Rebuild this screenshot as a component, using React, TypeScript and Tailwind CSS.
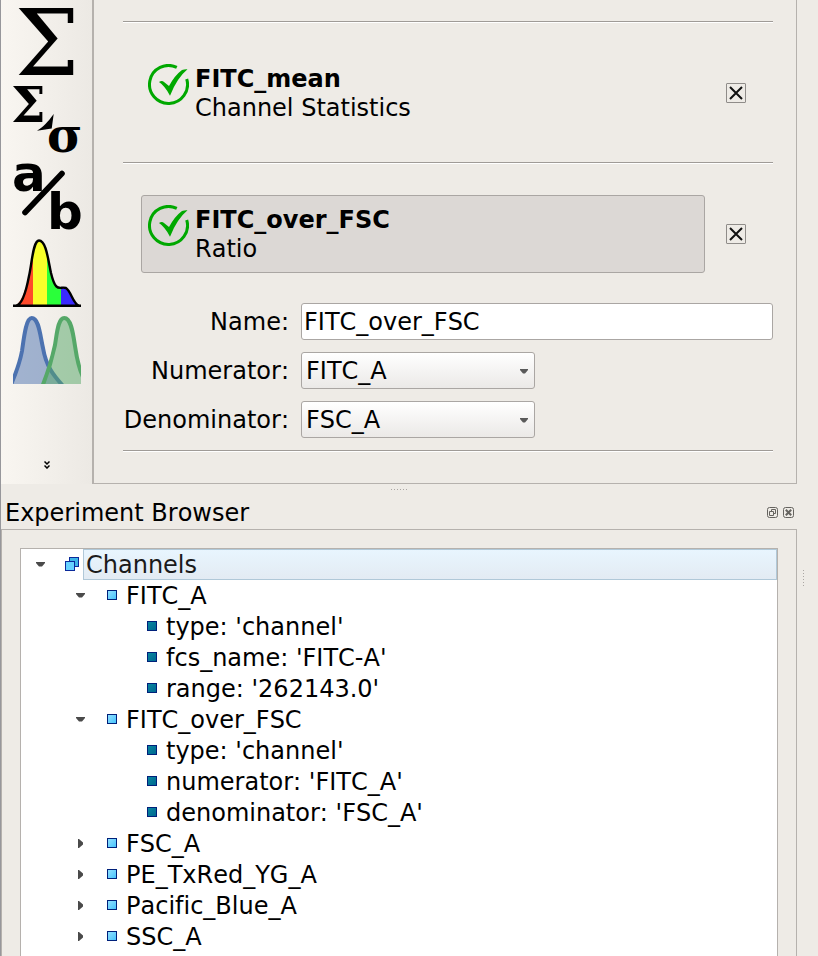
import { useState, type ReactNode } from 'react';

const tools: { label: string; art: ReactNode }[] = [
  {
    label: 'Channel statistics',
    art: (
      <text x="2" y="67" fontSize="91" className="font-['DejaVu_Serif',serif]">
        Σ
      </text>
    ),
  },
  {
    label: 'Transformed statistics',
    art: (
      <>
        <g fontWeight="bold" className="font-['DejaVu_Serif',serif]">
          <text x="-2" y="37" fontSize="49">
            Σ
          </text>
          <text x="34" y="67" fontSize="48">
            σ
          </text>
        </g>
        <path d="M24 45.7C30 42 35 37 40.7 29L38.7 43.5Z" />
      </>
    ),
  },
  {
    label: 'Ratio',
    art: (
      <>
        <g fontSize="50" fontWeight="bold" className="font-['DejaVu_Sans',sans-serif]">
          <text x="-1" y="29">
            a
          </text>
          <text x="34" y="67">
            b
          </text>
        </g>
        <path d="M12 50.5L49 11.5" stroke="black" strokeWidth="5.6" strokeLinecap="round" />
      </>
    ),
  },
  {
    label: 'Bleedthrough',
    art: (
      <>
        <clipPath id="spectrum">
          <path d="M1 67C7 66 12 53 16 37C19 24 20 1 26 1C33 1 35 20 38 34C43 55 47 47 53 49C58 52 60 66 67 67Z" />
        </clipPath>
        <g clipPath="url(#spectrum)">
          <rect width="20" height="68" fill="#ff4a2a" />
          <rect x="20" width="14" height="68" fill="#f8ff2a" />
          <rect x="34" width="14" height="68" fill="#2aff3a" />
          <rect x="48" width="20" height="68" fill="#3a2aff" />
        </g>
        <path
          d="M0 66.7H3C9 66 13 53 16 37C19 24 20 1.5 26 1.5C33 1.5 35 20 38 34C43 55 47 47 53 49C58 52 60 65 66 66.7H68M0 66.7H68"
          fill="none"
          stroke="black"
          strokeWidth="2.4"
        />
      </>
    ),
  },
  {
    label: 'Gaussian mixture',
    art: (
      <>
        <clipPath id="mixture">
          <rect width="68" height="68" />
        </clipPath>
        <g strokeWidth="4" clipPath="url(#mixture)">
          <path
            d="M-3 71C4 55 7 46 9 35C11 21 13 2 18.7 2C26 2 27 19 30 32C33 50 40 59 51 71"
            fill="#4c72b080"
            stroke="#4c72b0"
          />
          <path
            d="M29 71C36 54 39 43 42 29C44 17 45 2 51.3 2C58 2 60 17 62 30C64 44 66 54 71 63V71"
            fill="#55a86880"
            stroke="#55a868"
          />
        </g>
      </>
    ),
  },
];

function Rule() {
  return <hr className="h-[2px] border-t border-b border-t-[#9f9b97] border-b-white" />;
}

function Operation({ name, kind, selected }: { name: string; kind: string; selected?: boolean }) {
  return (
    <div className="flex items-center gap-[21px] pr-[27px] pl-[18px]">
      <button
        className={`flex h-[78px] flex-1 items-start gap-[6px] rounded-[3px] border px-[6px] pt-[9px] text-left leading-[29px] ${
          selected ? 'border-[#aaa6a3] bg-[#dcd8d5]' : 'border-transparent'
        }`}
      >
        <svg width="41" height="41" viewBox="0 0 41 41" fill="none" aria-hidden="true">
          <path d="M28.8 3.4A19 19 0 1 0 38.7 15" stroke="#00a800" strokeWidth="3" />
          <path d="M11 18Q14 16 16 18L21 22Q27 11 34 6Q37 5 39.5 5.3Q29 14 22 31.7Q17 22 11 18Z" fill="#00a800" />
        </svg>
        <span className="flex flex-col pt-px">
          <strong>{name}</strong>
          <span>{kind}</span>
        </span>
      </button>
      <button
        aria-label={`Remove ${name}`}
        className="flex size-5 items-center justify-center rounded-[1px] border border-[#8f8c89]"
      >
        <svg width="14" height="14" viewBox="0 0 14 14" aria-hidden="true">
          <path d="M1 1L13 13M13 1L1 13" stroke="#111" strokeWidth="2" />
        </svg>
      </button>
    </div>
  );
}

function Arrow({ open }: { open: boolean }) {
  return (
    <svg width="10" height="10" viewBox="0 0 10 10" fill="#4a4a4a" className="block" aria-hidden="true">
      <path d={open ? 'M1 3H10V4L7 7.5H4L1 4Z' : 'M3 1H4L8 4.5V6.5L4 10H3Z'} />
    </svg>
  );
}

function Picker({ id, options }: { id: string; options: string[] }) {
  return (
    <div className="relative w-[234px]">
      <select
        id={id}
        className="block h-[37px] w-full appearance-none rounded-[3px] border border-[#aaa6a3] bg-linear-to-b from-white to-[#ebe9e7] pt-[2px] pl-[4px] leading-[29px]"
      >
        {options.map((option) => (
          <option key={option}>{option}</option>
        ))}
      </select>
      <svg
        width="8"
        height="5"
        viewBox="0 0 8 5"
        fill="#5a5a5a"
        className="pointer-events-none absolute top-[17px] right-[7px]"
        aria-hidden="true"
      >
        <path d="M0 0H8V1L5 4.5H3L0 1Z" />
      </svg>
    </div>
  );
}

type TreeNode = { label: string; children?: TreeNode[]; collapsed?: boolean };

const channels: TreeNode = {
  label: 'Channels',
  children: [
    {
      label: 'FITC_A',
      children: [{ label: "type: 'channel'" }, { label: "fcs_name: 'FITC-A'" }, { label: "range: '262143.0'" }],
    },
    {
      label: 'FITC_over_FSC',
      children: [{ label: "type: 'channel'" }, { label: "numerator: 'FITC_A'" }, { label: "denominator: 'FSC_A'" }],
    },
    { label: 'FSC_A', children: [{ label: "type: 'channel'" }], collapsed: true },
    { label: 'PE_TxRed_YG_A', children: [{ label: "type: 'channel'" }], collapsed: true },
    { label: 'Pacific_Blue_A', children: [{ label: "type: 'channel'" }], collapsed: true },
    { label: 'SSC_A', children: [{ label: "type: 'channel'" }], collapsed: true },
  ],
};

function NodeIcon({ root, leaf }: { root: boolean; leaf: boolean }) {
  if (root) {
    return (
      <svg width="16" height="16" viewBox="0 0 16 16" stroke="#0a2a9a" aria-hidden="true">
        <rect x="5.5" y="1.5" width="9" height="9" fill="#3db4e6" />
        <rect x="1.5" y="5.5" width="9" height="9" fill="#66d2ff" />
      </svg>
    );
  }
  return (
    <span
      className={`mx-[3px] size-[10px] border border-[#00207a] bg-linear-to-br ${
        leaf ? 'from-[#0a86a0] to-[#006890]' : 'from-[#8fe0ff] to-[#44c4fc]'
      }`}
    />
  );
}

function Branch({ node, root = false }: { node: TreeNode; root?: boolean }) {
  const [open, setOpen] = useState(!node.collapsed);
  return (
    <li role="treeitem" aria-expanded={node.children ? open : undefined} aria-selected={root}>
      <div className="flex h-[31px] items-center pb-px">
        {node.children ? (
          <button
            aria-label={`Toggle ${node.label}`}
            className="mr-[19px] ml-[14px]"
            onClick={() => setOpen(!open)}
          >
            <Arrow open={open} />
          </button>
        ) : (
          <span className="w-[43px]" />
        )}
        <NodeIcon root={root} leaf={!node.children} />
        <span
          className={`ml-[3px] h-[31px] flex-1 self-start border pt-px pl-[2px] leading-[29px] ${
            root ? 'border-[#b0c8d8] bg-linear-to-b from-[#e8f5fe] to-[#e3ebf3] text-[#1a1a1a]' : 'border-transparent'
          }`}
        >
          {node.label}
        </span>
      </div>
      {node.children && open && (
        <ul role="group" className="pl-[40px]">
          {node.children.map((child) => (
            <Branch key={child.label} node={child} />
          ))}
        </ul>
      )}
    </li>
  );
}

export default function App() {
  return (
    <div className="flex h-screen overflow-hidden border-l border-[#97979b] bg-[#eeebe6] font-['DejaVu_Sans',sans-serif] text-[24px] text-black [font-kerning:none] [font-variant-ligatures:none]">
      <div className="flex min-w-0 flex-1 flex-col">
        <div className="flex shrink-0">
          <nav
            aria-label="Operations"
            className="flex w-[91px] flex-col items-center gap-[9px] bg-linear-to-r from-[#f9f6f1] to-[#ece9e4] pt-2"
          >
            {tools.map((tool) => (
              <button key={tool.label} aria-label={tool.label}>
                <svg width="68" height="68" viewBox="0 0 68 68" className="block overflow-visible">
                  {tool.art}
                </svg>
              </button>
            ))}
            <button aria-label="More operations" className="mt-[68px]">
              <svg width="6" height="8" viewBox="0 0 6 8" fill="none" stroke="black" strokeWidth="1.5" className="block">
                <path d="M0.5 0.5L3 3L5.5 0.5M0.5 4.5L3 7L5.5 4.5" />
              </svg>
            </button>
          </nav>
          <main className="flex-1 border-r border-b border-l-2 border-[#b5b1ad] pt-[21px] pr-[23px] pb-[31px] pl-[29px]">
            <Rule />
            <div className="pt-[31px] pb-[30px]">
              <Operation name="FITC_mean" kind="Channel Statistics" />
            </div>
            <Rule />
            <div className="pt-[31px] pb-[30px]">
              <Operation name="FITC_over_FSC" kind="Ratio" selected />
            </div>
            <form className="grid grid-cols-[166px_1fr] items-center gap-x-[12px] gap-y-[12px] pb-[12px] leading-[29px]">
              <label htmlFor="name" className="pt-[2px] text-right">
                Name:
              </label>
              <input
                id="name"
                defaultValue="FITC_over_FSC"
                className="h-[37px] w-full min-w-0 rounded-[3px] border border-[#aaa6a3] bg-white pl-[2px]"
              />
              <label htmlFor="numerator" className="pt-[2px] text-right">
                Numerator:
              </label>
              <Picker id="numerator" options={['FITC_A', 'FSC_A', 'SSC_A']} />
              <label htmlFor="denominator" className="pt-[2px] text-right">
                Denominator:
              </label>
              <Picker id="denominator" options={['FSC_A', 'FITC_A', 'SSC_A']} />
            </form>
            <Rule />
          </main>
        </div>

        <div className="flex h-[11px] shrink-0 items-center justify-center gap-[2px]">
          {[0, 1, 2, 3, 4, 5].map((dot) => (
            <span key={dot} className="size-px bg-[#aaa6a3]" />
          ))}
        </div>

        <header className="flex h-[34px] shrink-0 items-center gap-[5px] pr-[3px] pl-1">
          <h2 className="flex-1 pt-[2px]">Experiment Browser</h2>
          <button aria-label="Float">
            <svg width="11" height="11" viewBox="0 0 11 11" fill="none" stroke="#65635f" className="block">
              <rect x="0.5" y="0.5" width="10" height="10" rx="2" />
              <path d="M4.5 4V2.5H8.5V6.5H7M2.5 4.5H6.5V8.5H2.5Z" />
            </svg>
          </button>
          <button aria-label="Close">
            <svg width="11" height="11" viewBox="0 0 11 11" fill="none" stroke="#65635f" className="block">
              <rect x="0.5" y="0.5" width="10" height="10" rx="2" />
              <path d="M2.8 2.8L8.2 8.2M8.2 2.8L2.8 8.2" strokeWidth="2" />
            </svg>
          </button>
        </header>

        <section className="flex min-h-0 flex-1 flex-col border-t border-r border-l border-[#b5b1ad] pt-[18px] pr-[18px] pl-[18px]">
          <ul
            role="tree"
            aria-label="Experiment"
            className="flex-1 overflow-hidden border-t border-r border-l border-[#b5b1ad] bg-white"
          >
            <Branch node={channels} root />
          </ul>
        </section>
      </div>

      <div className="flex w-[21px] flex-col items-start justify-center gap-[2px] pt-[200px] pl-[6px]">
        {[0, 1, 2, 3, 4, 5].map((dot) => (
          <span key={dot} className="size-px bg-[#aaa6a3]" />
        ))}
      </div>
    </div>
  );
}
